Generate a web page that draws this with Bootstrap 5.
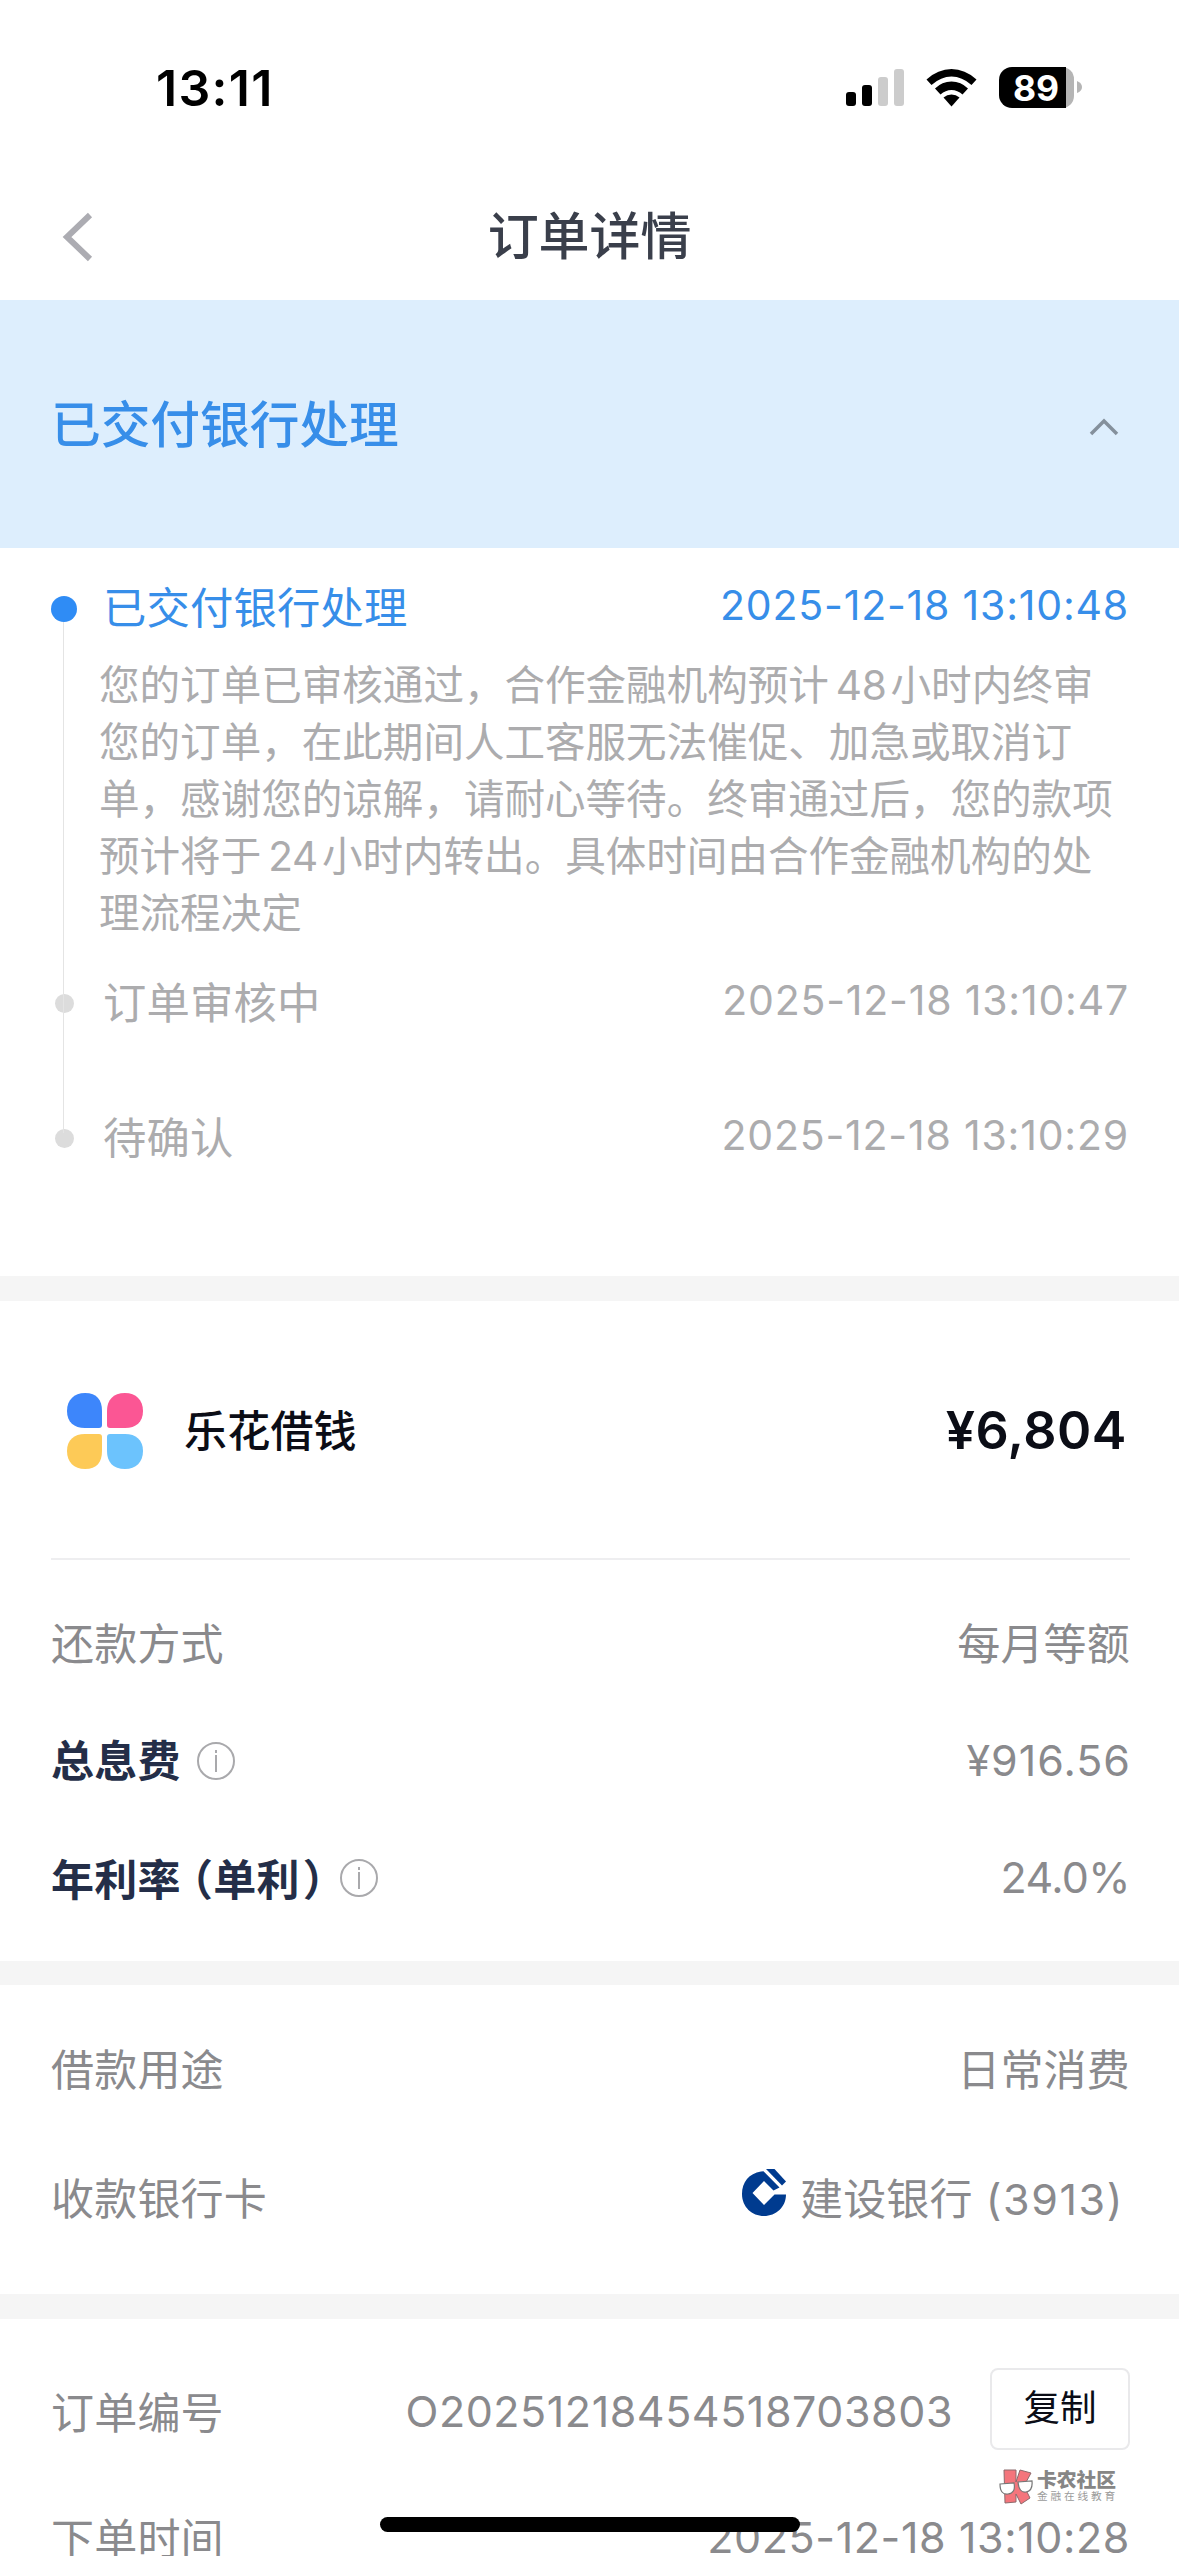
<!DOCTYPE html>
<html lang="zh-CN">
<head>
<meta charset="utf-8">
<meta name="viewport" content="width=device-width, initial-scale=1">
<title>订单详情</title>
<link href="https://cdn.jsdelivr.net/npm/bootstrap@5.3.0/dist/css/bootstrap.min.css" rel="stylesheet">
<style>
body{font-family:Inter,"Noto Sans CJK SC",sans-serif;font-size:43px;line-height:1.3;color:#8a8a8d;background:#fff;white-space:nowrap}
svg{display:block;flex:none}
.phone{width:1179px;height:2556px}
.status{height:176px;padding:0 96px 0 156px;color:#000}
.clock{font-size:50px;font-weight:600;letter-spacing:1.3px}
.topbar{height:124px;padding-bottom:4px;color:#3a3f4b}
.topbar h1{font-size:51px;font-weight:500;margin:0;padding-top:2px;letter-spacing:-.1px}
.backbtn{left:62px;top:36px}
.banner{height:248px;background:#ddeefd;padding:3px 59px 0 51px;color:#378ee9}
.banner h2{font-size:49.7px;font-weight:500;margin:0}
.gap-band{background:#f5f5f5;flex:none}
.timeline{height:728px;color:#acacae}
.timeline::before{content:"";position:absolute;left:63px;top:74px;width:1px;height:511px;background:#e4e4e4}
.cj{padding-top:3px;letter-spacing:.2px}
.step{padding:0 51px 0 51px}
.step .cj{font-size:43.3px}
.step1{height:109px;padding-top:8px;color:#378ee9}
.step2{height:119.5px}
.step3{height:151px}
.pin{width:26px;height:26px;margin:4px 26px 0 0}
.pin i{width:19px;height:19px;background:#dcdcdc;border-radius:50%}
.step1 .pin i{width:26px;height:26px;background:#2f8cf5}
.stamp{font-size:41px;padding-bottom:2px;letter-spacing:.8px;margin-right:-1px}
.desc{padding:1px 0 0 99px;font-size:40.55px;line-height:56.9px;height:284.5px}
.num{margin:0 4px 0 7px;letter-spacing:-.3px}
.product{height:259px;margin:0 49px 0 51px;padding:2px 3px 0 16px;border-bottom:2px solid #eeeef0;color:#0b0d16}
.product b{font-weight:500;margin-left:41px}
.amount{font-size:52px;font-weight:600;letter-spacing:.5px}
.s2{height:660px}.s3{height:309px;padding-top:20px}.s4{padding-top:30px}
.rows{padding-top:25px}
.line{padding:0 49px 0 51px;height:117px}
.s3 .line{height:129px}.s4 .line{height:126px}
.key{color:#242e48;font-weight:700}
.fullw{font-family:"Noto Sans CJK SC",sans-serif;font-feature-settings:"halt"}
.fw-open{margin-left:11px}.fw-close{margin-left:3px}
.hint{margin-left:15px}
.v1{letter-spacing:1px;margin-right:-1px}.v2{letter-spacing:-.6px}.v3{letter-spacing:.6px}
.bank{margin:0 12px 11px 0}
.bankname{margin-right:6px}
.tail{margin-left:13px;letter-spacing:1.6px}
.orderno{letter-spacing:.55px}
.copy{width:140px;height:82px;border:2px solid #e9e9eb;border-radius:8px;font-size:36.5px;color:#0b0d16;background:#fff;padding:0 0 2px;line-height:1;margin:0 0 6px 37px}
.mark-wm{left:999px;top:2468px;color:#868686;line-height:1}
.wm-text{margin-left:2px;padding-top:3px}
.wm1{font-size:19.8px;font-weight:900}
.wm2{font-size:10.7px;letter-spacing:2.8px;margin-top:1px;color:#9b9b9b}
.homebar{left:380px;top:2517px;width:420px;height:15px;border-radius:8px;background:#000}
</style>
</head>
<body>
<div class="phone position-relative overflow-hidden d-flex flex-column">
  <header class="status d-flex align-items-center justify-content-between flex-shrink-0">
    <span class="clock">13:11</span>
    <svg width="240" height="50" viewBox="843 63 240 50">
      <rect x="846" y="92" width="10" height="14" rx="3"/><rect x="862" y="85" width="10" height="21" rx="3"/>
      <rect x="878" y="77" width="10" height="29" rx="3" fill="#ccc"/><rect x="894" y="69" width="10" height="37" rx="3" fill="#ccc"/>
      <path d="M926.5 79.5Q938 69 951.500 69T976.500 79.500L971.500 85Q962 76.500 951.500 76.500T931.500 85Z"/>
      <path d="M935 88.500Q942 81.500 951.500 81.500T968 88.500L962.500 94.500Q957.500 90 951.500 90T940.500 94.500Z"/>
      <path d="M943.500 97.500Q947 94.500 951.500 94.500T959.500 97.500L951.500 106.500Z"/>
      <path d="M1062 67a12 12 0 0 1 12 12v17a12 12 0 0 1-12 12z" fill="#b5b5b5"/>
      <path d="M1066 67V108H1012a13 13 0 0 1-13-13V80a13 13 0 0 1 13-13Z"/>
      <path d="M1077 81q5 2 5 6t-5 6z" fill="#b5b5b5"/>
      <text x="1036" y="100.500" text-anchor="middle" font-size="35.500" font-weight="700" fill="#fff" textLength="46">89</text>
    </svg>
  </header>
  <nav class="topbar position-relative d-flex align-items-center justify-content-center flex-shrink-0">
    <svg class="backbtn position-absolute" width="32" height="50" viewBox="0 0 32 50"><path d="M28 3 5 25l23 22" fill="none" stroke="#acacb2" stroke-width="6"/></svg>
    <h1>订单详情</h1>
  </nav>
  <section class="banner d-flex align-items-center justify-content-between flex-shrink-0">
    <h2>已交付银行处理</h2>
    <svg width="32" height="20" viewBox="0 0 32 20"><path d="M3 18 16 5l13 13" fill="none" stroke="#84909c" stroke-width="3.500"/></svg>
  </section>
  <section class="timeline position-relative flex-shrink-0">
    <div class="step step1 d-flex align-items-center">
      <span class="pin d-flex align-items-center justify-content-center"><i></i></span><span class="cj">已交付银行处理</span><span class="stamp ms-auto">2025-12-18 13:10:48</span>
    </div>
    <p class="desc mb-0">您的订单已审核通过，合作金融机构预计<span class="num">48</span>小时内终审<br>您的订单，在此期间人工客服无法催促、加急或取消订<br>单，感谢您的谅解，请耐心等待。终审通过后，您的款项<br>预计将于<span class="num">24</span>小时内转出。具体时间由合作金融机构的处<br>理流程决定</p>
    <div class="step step2 d-flex align-items-center">
      <span class="pin d-flex align-items-center justify-content-center"><i></i></span><span class="cj">订单审核中</span><span class="stamp ms-auto">2025-12-18 13:10:47</span>
    </div>
    <div class="step step3 d-flex align-items-center">
      <span class="pin d-flex align-items-center justify-content-center"><i></i></span><span class="cj">待确认</span><span class="stamp ms-auto">2025-12-18 13:10:29</span>
    </div>
  </section>
  <div class="gap-band" style="height:25px"></div>
  <section class="s2 flex-shrink-0">
    <div class="product d-flex align-items-center">
      <svg width="76" height="76" viewBox="0 0 76 76">
        <path d="M18 0C30 0 35 7 35 18V32q0 3-3 3H18C7 35 0 29 0 18S7 0 18 0Z" fill="#3d86fb"/>
        <path d="M58 0C46 0 40 7 40 18V32q0 3 3 3H58C69 35 76 29 76 18S69 0 58 0Z" fill="#fb5694"/>
        <path d="M18 76C30 76 35 69 35 58V44q0-3-3-3H18C7 41 0 47 0 58S7 76 18 76Z" fill="#fdca57"/>
        <path d="M58 76C46 76 40 69 40 58V44q0-3 3-3H58C69 41 76 47 76 58S69 76 58 76Z" fill="#6cc3fd"/>
      </svg>
      <b class="cj">乐花借钱</b><span class="amount ms-auto">¥6,804</span>
    </div>
    <div class="rows">
      <div class="line d-flex align-items-center justify-content-between"><span class="cj">还款方式</span><span class="cj">每月等额</span></div>
      <div class="line d-flex align-items-center"><span class="key cj">总息费</span>
        <svg class="hint" width="40" height="40" viewBox="0 0 40 40" fill="none" stroke="#a9a9ac" stroke-width="2"><circle cx="20" cy="20" r="18"/><path d="M20 14v17M20 9v3"/></svg>
        <span class="ms-auto v1">¥916.56</span></div>
      <div class="line d-flex align-items-center"><span class="key cj">年利率<span class="fullw fw-open">（</span>单利<span class="fullw fw-close">）</span></span>
        <svg class="hint" width="40" height="40" viewBox="0 0 40 40" fill="none" stroke="#a9a9ac" stroke-width="2"><circle cx="20" cy="20" r="18"/><path d="M20 14v17M20 9v3"/></svg>
        <span class="ms-auto v2">24.0%</span></div>
    </div>
  </section>
  <div class="gap-band" style="height:24px"></div>
  <section class="s3 flex-shrink-0">
    <div class="line d-flex align-items-center justify-content-between"><span class="cj">借款用途</span><span class="cj">日常消费</span></div>
    <div class="line d-flex align-items-center"><span class="cj">收款银行卡</span>
      <svg class="ms-auto bank" width="46" height="48" viewBox="0 0 46 48" fill="#003b8f"><path d="M19 2.500C7 4.500 0 13 0 25 0 38 10 47 22 47S44 38 44 25.500H32.500L22 36 10.500 24 22 12 31.500 21.500 37.500 18.500 21.500 2.300Z"/><path d="M24 0H32.500L44 12.500 40 16.500Z"/></svg>
      <span class="bankname cj">建设银行<span class="tail">(3913)</span></span></div>
  </section>
  <div class="gap-band" style="height:25px"></div>
  <section class="s4 flex-shrink-0">
    <div class="line d-flex align-items-center"><span class="cj">订单编号</span><span class="ms-auto orderno">O20251218454518703803</span><button class="copy">复制</button></div>
    <div class="line d-flex align-items-center justify-content-between"><span class="cj">下单时间</span><span class="v3">2025-12-18 13:10:28</span></div>
  </section>
  <div class="mark-wm position-absolute d-flex">
    <svg width="36" height="38" viewBox="0 0 36 38"><path d="M5 2H17V14L21 2 32 5 25 18 31 30 22 36 17 26V34L6 35Z" fill="#f4757c" stroke="#8d6a6c" stroke-width="1"/><path d="M1 16 15 15q2 10-6 11T1 16ZM19 14 33 13q1 10-6 11T19 14Z" fill="#fff" stroke="#777" stroke-width="1.200"/></svg>
    <div class="wm-text"><div class="wm1">卡农社区</div><div class="wm2">金融在线教育</div></div>
  </div>
  <div class="homebar position-absolute"></div>
</div>
<script src="https://cdn.jsdelivr.net/npm/bootstrap@5.3.0/dist/js/bootstrap.bundle.min.js"></script>
</body>
</html>
